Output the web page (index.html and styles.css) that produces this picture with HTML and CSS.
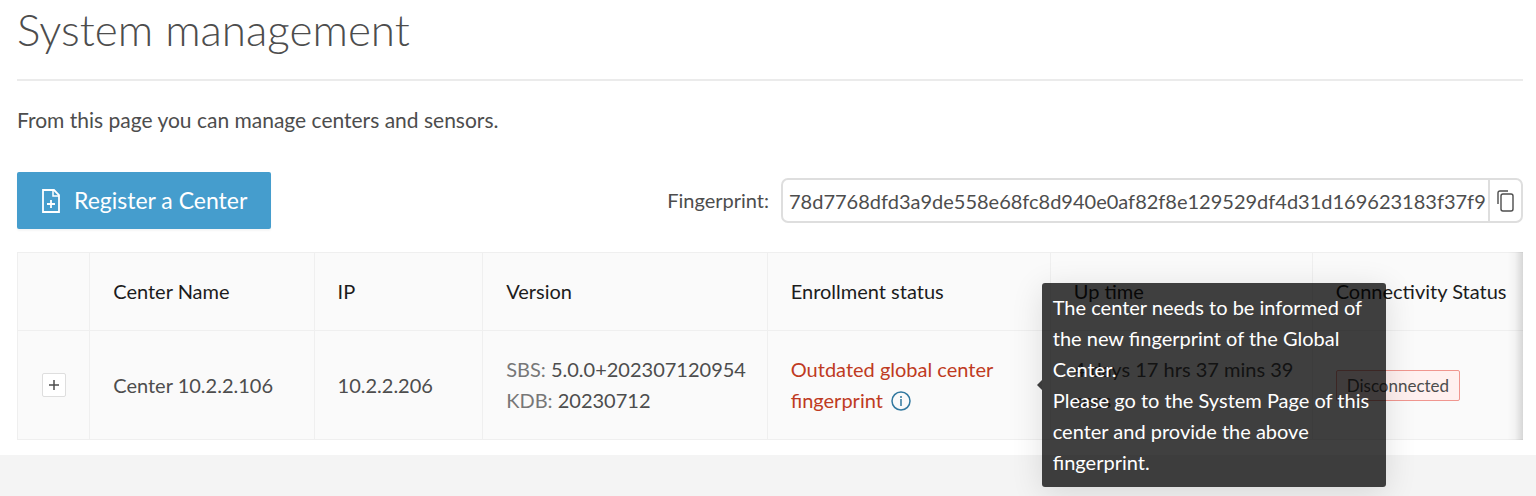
FILE: index.html
```
<!DOCTYPE html>
<html lang="en">

<head>
  <meta charset="UTF-8">
  <meta name="viewport" content="width=device-width, initial-scale=1.0">
  <title>System management</title>
  <link rel="stylesheet" href="styles.css">
</head>

<body>
  <main class="page">
    <h1 class="title">System management</h1>
    <p class="intro">From this page you can manage centers and sensors.</p>
    <div class="toolbar">
      <button class="register" type="button">
        <svg class="icon-file" viewBox="0 0 20 24" width="20" height="24" fill="none" stroke="currentColor" stroke-width="1.8">
          <path d="M2 1h11l5 5v17H2z" />
          <path d="M12 1v6h6" stroke-width="1.5" />
          <path d="M10 11v8M6 15h8" />
        </svg>
        Register a Center
      </button>
      <div class="fingerprint">
        <label for="fingerprint">Fingerprint:</label>
        <div class="field">
          <input id="fingerprint" type="text" readonly value="78d7768dfd3a9de558e68fc8d940e0af82f8e129529df4d31d169623183f37f9">
          <button class="copy" type="button" aria-label="Copy">
            <svg viewBox="0 0 18 22" width="18" height="22" fill="none" stroke="currentColor" stroke-width="1.4">
              <rect x="4" y="4" width="12" height="17" rx="2" />
              <path d="M1 14V3q0-2 2-2h8" />
            </svg>
          </button>
        </div>
      </div>
    </div>
    <div class="table-box">
      <table class="centers">
        <colgroup>
          <col class="col-expand">
          <col class="col-name">
          <col class="col-ip">
          <col class="col-version">
          <col class="col-status">
          <col class="col-uptime">
          <col>
        </colgroup>
        <thead>
          <tr>
            <th></th>
            <th>Center Name</th>
            <th>IP</th>
            <th>Version</th>
            <th>Enrollment status</th>
            <th>Up time</th>
            <th>Connectivity Status</th>
          </tr>
        </thead>
        <tbody>
          <tr>
            <td class="expand-cell">
              <button class="expand" type="button" aria-label="Expand row">
                <svg viewBox="0 0 10 10" width="10" height="10" stroke="currentColor" stroke-width="1.5">
                  <path d="M5 0v10M0 5h10" />
                </svg>
              </button>
            </td>
            <td>Center 10.2.2.106</td>
            <td>10.2.2.206</td>
            <td><span class="key">SBS:</span> 5.0.0+202307120954<br><span class="key">KDB:</span> 20230712</td>
            <td class="status">
              Outdated global center fingerprint
              <svg class="icon-info" viewBox="0 0 20 20" width="20" height="20" fill="none" stroke="currentColor" stroke-width="1.5">
                <circle cx="10" cy="10" r="9" />
                <path d="M10 8v7M10 5v2" />
              </svg>
              <div class="tooltip" role="tooltip">The center needs to be informed of the new fingerprint of the Global Center.<br>Please go to the System Page of this center and provide the above fingerprint.</div>
            </td>
            <td>4 days 17 hrs 37 mins 39 secs</td>
            <td><span class="tag">Disconnected</span></td>
          </tr>
        </tbody>
      </table>
    </div>
  </main>
</body>

</html>
```
FILE: styles.css
```
* {
  box-sizing: border-box;
  margin: 0;
  padding: 0;
}

body {
  min-height: 100vh;
  background-color: #f4f4f4;
  color: #4d4d4d;
  font: 20px/31px Lato, "Liberation Sans", sans-serif;
  overflow-x: hidden;
}

button,
input {
  font: inherit;
  color: inherit;
}

button {
  cursor: pointer;
}

.page {
  padding: 0 13px 15px 17px;
  background-color: #fff;
}

.title {
  padding-bottom: 21px;
  border-bottom: 2px solid #ebebeb;
  font-size: 44px;
  font-weight: 300;
  line-height: 58px;
}

.intro {
  margin: 23px 0 37px;
  font-size: 21px;
}

.toolbar {
  display: flex;
  justify-content: space-between;
  align-items: center;
  margin-bottom: 23px;
}

.register {
  display: flex;
  align-items: center;
  gap: 13px;
  height: 57px;
  padding: 0 24px;
  border: 0;
  border-radius: 2px;
  background-color: #459dcd;
  box-shadow: 0 2px 2px rgba(0, 0, 0, .04);
  color: #fff;
  font-size: 23px;
}

.fingerprint {
  display: flex;
  align-items: center;
  gap: 12px;
}

.field {
  display: flex;
  width: 742px;
  height: 45px;
  border: 2px solid #dedede;
  border-radius: 7px;
}

.field input {
  flex: 1;
  min-width: 0;
  padding: 2px 0 0 6px;
  border: 0;
  outline: 0;
  background: none;
}

.copy {
  display: flex;
  align-items: center;
  justify-content: center;
  width: 33px;
  border: 0;
  border-left: 2px solid #dedede;
  background: none;
}

.table-box {
  position: relative;
}

/* scroll shadow on the right edge */
.table-box::after {
  content: "";
  position: absolute;
  top: 0;
  right: 0;
  bottom: 0;
  width: 16px;
  background: linear-gradient(to left, rgba(0, 0, 0, .14), rgba(0, 0, 0, .03) 50%, transparent);
}

.centers {
  width: 100%;
  table-layout: fixed;
  border-collapse: collapse;
  background-color: #fafafa;
}

.col-expand {
  width: 4.8%;
}

.col-name {
  width: 14.9%;
}

.col-ip {
  width: 11.2%;
}

.col-version {
  width: 18.9%;
}

.col-status {
  width: 18.8%;
}

.col-uptime {
  width: 17.4%;
}

.centers th,
.centers td {
  padding: 23px 0 23px 23px;
  border: 1px solid #efefef;
  text-align: left;
}

.centers th:last-child,
.centers td:last-child {
  border-right: 0;
}

.centers th {
  height: 78px;
  color: #1c1c1c;
  font-weight: 400;
  white-space: nowrap;
}

.centers td {
  height: 109px;
}

.centers .expand-cell {
  padding: 0;
}

.expand {
  display: flex;
  align-items: center;
  justify-content: center;
  width: 24px;
  height: 24px;
  margin: 0 auto;
  border: 1px solid #dedede;
  border-radius: 2px;
  background-color: #fff;
}

.key {
  color: #777;
}

.centers .status {
  position: relative;
  padding-right: 40px;
  color: #bf3a22;
}

.icon-info {
  margin-left: 3px;
  color: #31789f;
  vertical-align: -3px;
}

.tooltip {
  position: absolute;
  top: 50%;
  left: calc(100% - 8px);
  z-index: 1;
  width: 344px;
  padding: 9px 11px;
  border-radius: 3px;
  background-color: rgba(0, 0, 0, .75);
  box-shadow: 0 6px 32px rgba(0, 0, 0, .12);
  color: #fff;
  transform: translateY(-50%);
}

.tooltip::before {
  content: "";
  position: absolute;
  top: 50%;
  right: 100%;
  border: 5px solid transparent;
  border-left: 0;
  border-right-color: rgba(0, 0, 0, .75);
  transform: translateY(-50%);
}

.tag {
  display: inline-block;
  padding: 0 10px;
  border: 1px solid #f0968f;
  border-radius: 2px;
  background-color: #fff0ef;
  font-size: 17px;
  line-height: 29px;
}
```
